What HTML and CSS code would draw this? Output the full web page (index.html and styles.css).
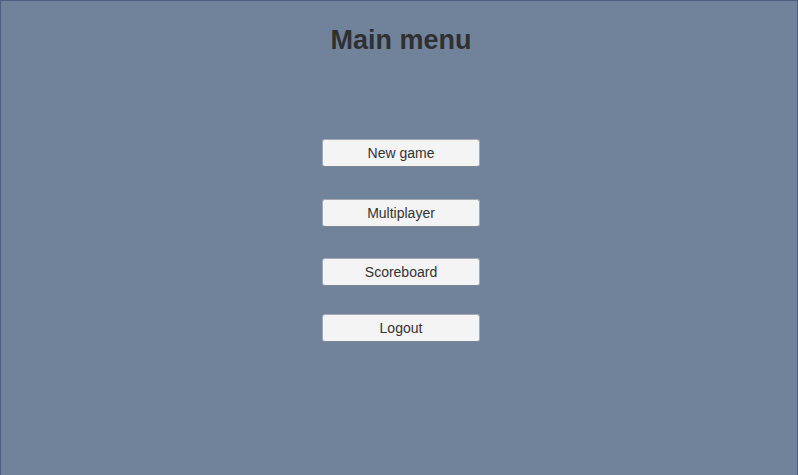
FILE: index.html
```html
<!DOCTYPE html>
<html>
<head>
<meta charset="utf-8">
<link rel="stylesheet" href="styles.css">
</head>
<body>
<div class="screen">
  <h1 class="title">Main menu</h1>
  <div class="menu">
    <button class="btn">New game</button>
    <button class="btn">Multiplayer</button>
    <button class="btn">Scoreboard</button>
    <button class="btn btn-last">Logout</button>
  </div>
</div>
</body>
</html>
```
FILE: styles.css
```css
html, body {
  margin: 0;
  padding: 0;
  width: 798px;
  height: 475px;
  overflow: hidden;
}
.screen {
  box-sizing: border-box;
  width: 798px;
  height: 475px;
  background: #71829b;
  border: 1px solid #4d5f7e;
  border-bottom: none;
  padding-left: 4px;
  display: flex;
  flex-direction: column;
  align-items: center;
  font-family: "Liberation Sans", Arial, sans-serif;
}
.title {
  margin: 24px 0 0 0;
  font-size: 27px;
  line-height: 30px;
  font-weight: bold;
  color: #2f3033;
}
.menu {
  margin-top: 84px;
  display: flex;
  flex-direction: column;
  align-items: center;
}
.btn {
  box-sizing: border-box;
  width: 158px;
  height: 28px;
  margin-bottom: 32px;
  background: #f4f4f4;
  border: 1px solid #a3a9b3;
  border-bottom-color: #7d8594;
  border-radius: 3px;
  font-family: "Liberation Sans", Arial, sans-serif;
  font-size: 14px;
  color: #333333;
  padding: 0;
}
.btn:nth-child(2) { margin-bottom: 31px; }
.btn:nth-child(3) { margin-bottom: 28px; }
```
